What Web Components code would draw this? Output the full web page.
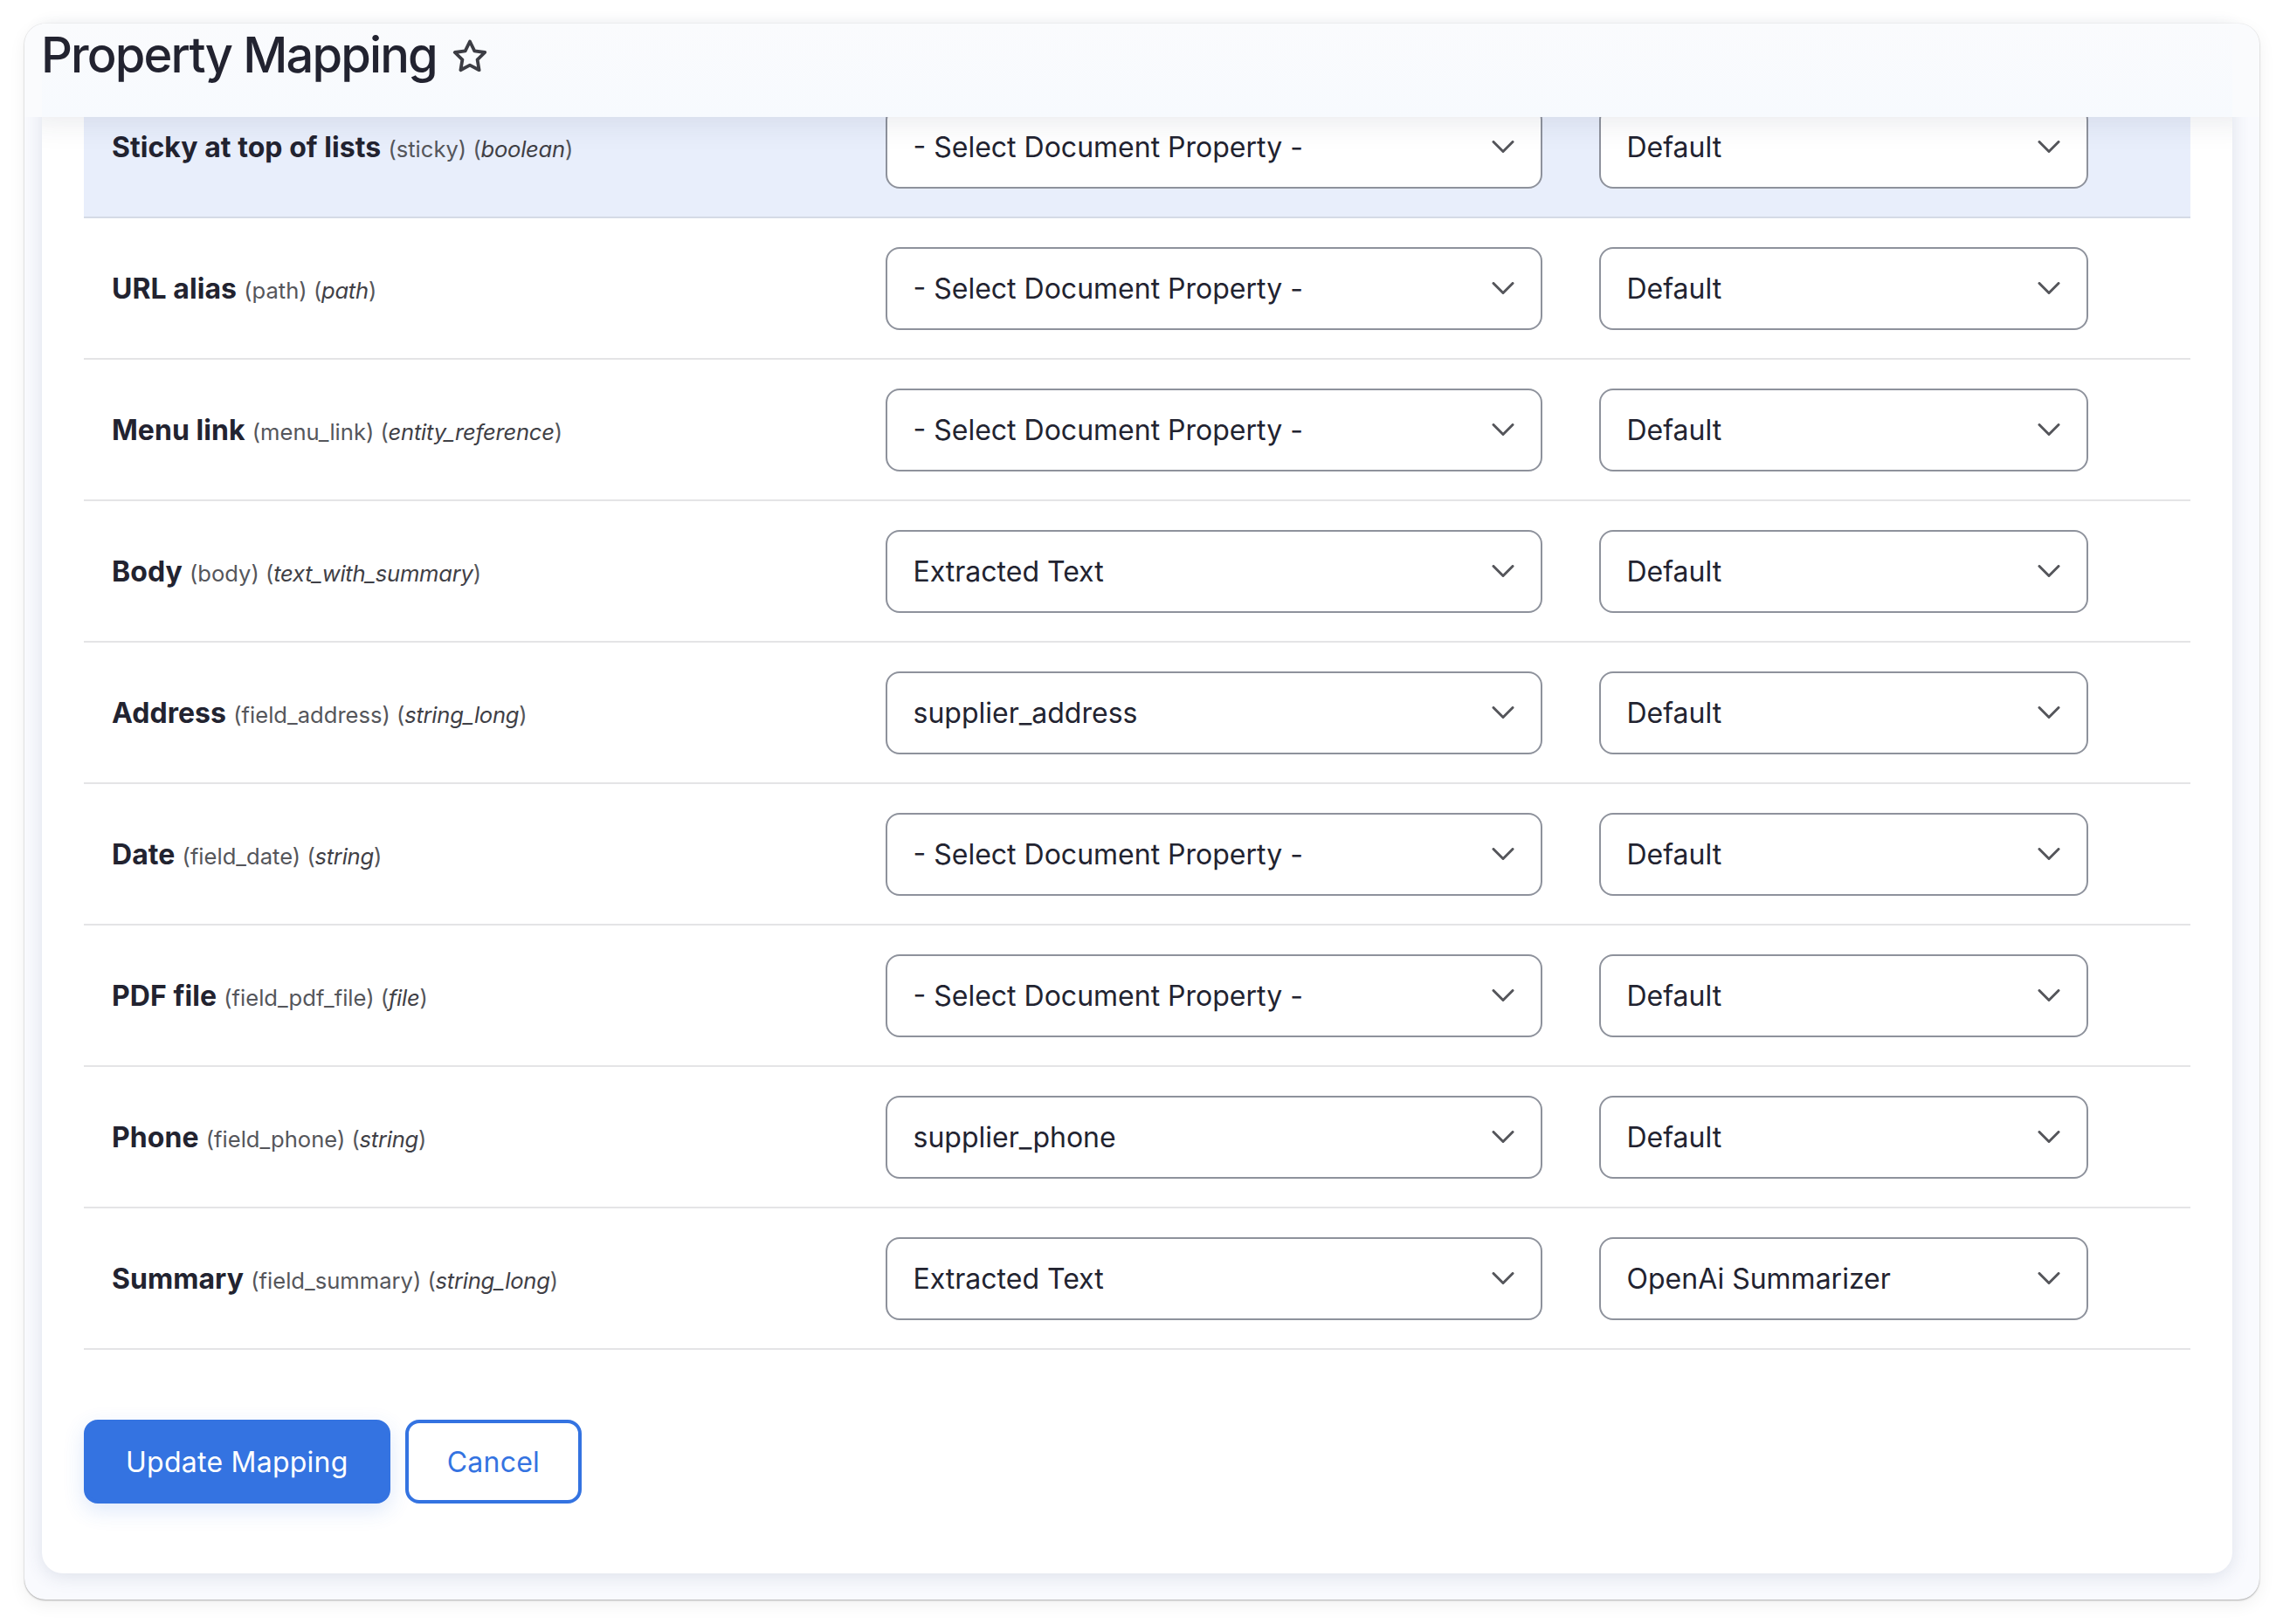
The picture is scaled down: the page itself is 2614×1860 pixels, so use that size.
<!DOCTYPE html>
<html>
<head>
<meta charset="utf-8">
<title>Property Mapping</title>
<style>
  html, body { margin: 0; background: #fff; }
  body { box-sizing: border-box; min-height: 1860px; padding: 27px 27px 28px 28px;
    font-family: Inter, "Liberation Sans", sans-serif; color: #222330; }
</style>
</head>
<body>
<template id="tpl-select">
  <style>
    :host { display: block; }
    .box {
      height: 95px; box-sizing: border-box; background: #fff;
      border: 2px solid #8e929c; border-radius: 16px;
      padding: 0 30px 0 29.5px;
      display: flex; align-items: center; justify-content: space-between;
      font-size: 32px; color: #222330; white-space: nowrap;
    }
    svg { width: 26px; height: 15px; flex: none; }
  </style>
  <div class="box">
    <span><slot></slot></span>
    <svg viewBox="0 0 26 15"><path d="M2 1.5L13 12.5L24 1.5" fill="none" stroke="#55565b" stroke-width="3" stroke-linecap="round" stroke-linejoin="round"/></svg>
  </div>
</template>

<template id="tpl-row">
  <style>
    :host { display: grid; grid-template-columns: 918px 817px 560px; box-sizing: border-box; height: 162px;
      align-items: center; border-bottom: 2px solid #e4e4e6; }
    :host([active]) { background: #e8eefb; border-bottom-color: #d5dae6; }
    .label { padding-left: 32px; white-space: nowrap; color: #55565b; font-size: 25.6px; }
    b { font-weight: 700; font-size: 32px; letter-spacing: .05px; color: #222330; margin-right: 1px; }
    .type { letter-spacing: -.01em; }
    i { color: #3f4046; }
    .first { width: 752px; }
  </style>
  <div class="label"><b></b> <span class="machine"></span> <span class="type">(<i></i>)</span></div>
  <map-select class="first"></map-select>
  <map-select class="second"></map-select>
</template>

<template id="tpl-button">
  <style>
    :host { display: inline-block; }
    .btn {
      height: 96px; box-sizing: border-box; border-radius: 16px; border: 4px solid #3473e1;
      background: #3473e1; color: #fff; font-size: 32px; letter-spacing: .25px;
      display: flex; align-items: center; justify-content: center; padding: 0 44px;
      box-shadow: 0 8px 24px rgba(52,115,225,.16);
    }
    :host([outline]) .btn { background: #fff; color: #3473e1; box-shadow: none; }
  </style>
  <div class="btn"><slot></slot></div>
</template>

<template id="tpl-panel">
  <style>
    :host { display: block; position: relative; box-sizing: border-box; width: 2559px; height: 1805px;
      background: #f9fafe; border-radius: 24px; padding: 0 31px 30px 20px;
      box-shadow: 0 1px 2px rgba(0,0,0,.28), 0 0 1px rgba(0,0,0,.18), 0 6px 20px rgba(0,0,0,.06); }
    .card { height: 100%; box-sizing: border-box; background: #fff; border-radius: 0 0 24px 24px;
      padding: 61px 48px 0 48px; box-shadow: 0 4px 20px rgba(60,75,110,.14); }
    .actions { display: flex; gap: 17px; margin-top: 80px; }
    .edge { position: absolute; top: 0; left: 0; right: 0; height: 107px; background: #fafbfd; border-radius: 24px 24px 0 0; z-index: 2; }
    /* sticky title bar: sits over the first row of the table */
    .head { position: absolute; top: 0; left: 0; right: 0; height: 107px; box-sizing: border-box;
      background: linear-gradient(180deg, #fafbfd, #f7fafe); border-radius: 24px 24px 0 0; z-index: 2;
      box-shadow: 0 0 40px rgba(40,50,80,.13); clip-path: inset(0 31px -60px 20px); }
    .title { position: absolute; top: 0; left: 19px; display: flex; align-items: flex-start; gap: 18px; z-index: 3; }
    h1 { margin: 0; font-size: 56px; line-height: 72px; font-weight: 500; letter-spacing: -.033em; color: #222330; white-space: nowrap; }
    svg { width: 40px; height: 38px; margin-top: 18px; flex: none; }
  </style>
  <div class="edge"></div>
  <div class="head"></div>
  <div class="title">
    <h1><slot name="title"></slot></h1>
    <svg viewBox="0 0 40 38"><path d="M20 2.5L25.3 13.3L37.2 15L28.6 23.4L30.6 35.2L20 29.6L9.4 35.2L11.4 23.4L2.8 15L14.7 13.3Z" fill="none" stroke="#3c3d44" stroke-width="3.8" stroke-linejoin="round"/></svg>
  </div>
  <div class="card">
    <slot></slot>
    <div class="actions"><slot name="actions"></slot></div>
  </div>
</template>

<map-panel>
  <span slot="title">Property Mapping</span>
  <map-row active name="Sticky at top of lists" machine="sticky" type="boolean" source="- Select Document Property -" plugin="Default"></map-row>
  <map-row name="URL alias" machine="path" type="path" source="- Select Document Property -" plugin="Default"></map-row>
  <map-row name="Menu link" machine="menu_link" type="entity_reference" source="- Select Document Property -" plugin="Default"></map-row>
  <map-row name="Body" machine="body" type="text_with_summary" source="Extracted Text" plugin="Default"></map-row>
  <map-row name="Address" machine="field_address" type="string_long" source="supplier_address" plugin="Default"></map-row>
  <map-row name="Date" machine="field_date" type="string" source="- Select Document Property -" plugin="Default"></map-row>
  <map-row name="PDF file" machine="field_pdf_file" type="file" source="- Select Document Property -" plugin="Default"></map-row>
  <map-row name="Phone" machine="field_phone" type="string" source="supplier_phone" plugin="Default"></map-row>
  <map-row name="Summary" machine="field_summary" type="string_long" source="Extracted Text" plugin="OpenAi Summarizer"></map-row>
  <map-button slot="actions">Update Mapping</map-button>
  <map-button slot="actions" outline>Cancel</map-button>
</map-panel>

<script>
  function fromTemplate(el, id) {
    const root = el.attachShadow({ mode: 'open' });
    root.appendChild(document.getElementById(id).content.cloneNode(true));
    return root;
  }

  class MapSelect extends HTMLElement {
    constructor() { super(); fromTemplate(this, 'tpl-select'); }
  }
  class MapButton extends HTMLElement {
    constructor() { super(); fromTemplate(this, 'tpl-button'); }
  }
  class MapPanel extends HTMLElement {
    constructor() { super(); fromTemplate(this, 'tpl-panel'); }
  }
  class MapRow extends HTMLElement {
    constructor() { super(); fromTemplate(this, 'tpl-row'); }
    connectedCallback() {
      const root = this.shadowRoot;
      root.querySelector('b').textContent = this.getAttribute('name');
      root.querySelector('.machine').textContent = '(' + this.getAttribute('machine') + ')';
      root.querySelector('i').textContent = this.getAttribute('type');
      root.querySelector('.first').textContent = this.getAttribute('source');
      root.querySelector('.second').textContent = this.getAttribute('plugin');
    }
  }

  customElements.define('map-select', MapSelect);
  customElements.define('map-button', MapButton);
  customElements.define('map-row', MapRow);
  customElements.define('map-panel', MapPanel);
</script>
</body>
</html>
